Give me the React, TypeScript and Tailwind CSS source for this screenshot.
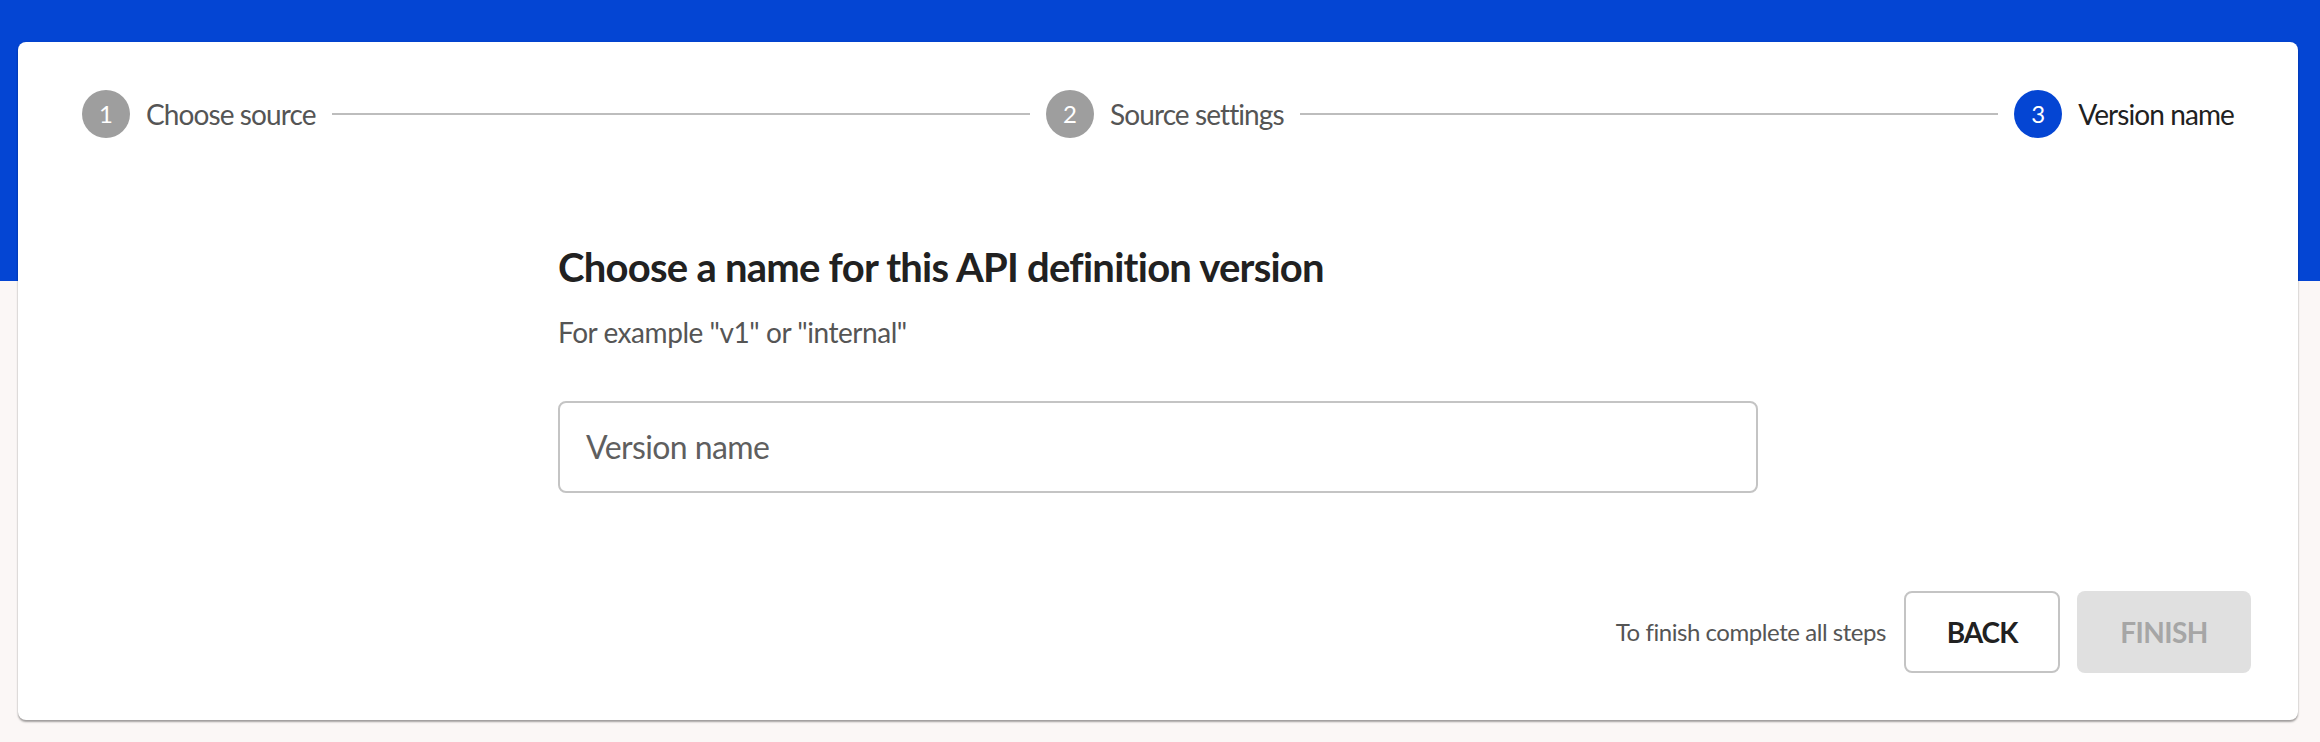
import React from "react";

const font = { fontFamily: "Lato, 'Liberation Sans', sans-serif" };

function Step({ n, label, active }: { n: number; label: string; active?: boolean }) {
  return (
    <div className="flex items-center shrink-0">
      <div
        className={
          "w-[48px] h-[48px] rounded-full flex items-center justify-center text-white text-[24px] leading-none " +
          (active ? "bg-[#0445d3]" : "bg-[#9e9e9e]")
        }
      >
        {n}
      </div>
      <span
        className={
          "ml-[16px] text-[28px] leading-none tracking-[-0.9px] " +
          (active ? "text-[#212121]" : "text-[#555555]")
        }
      >
        {label}
      </span>
    </div>
  );
}

function Connector() {
  return <div className="flex-1 h-[2px] bg-[#bdbdbd] mx-[16px]" />;
}

export default function App() {
  return (
    <div
      style={font}
      className="w-full h-[742px] overflow-hidden bg-[linear-gradient(to_bottom,#0445d3_281px,#fbf7f6_281px)] pt-[42px]"
    >
      <div className="ml-[18px] mr-[22px] h-[678px] bg-white rounded-[8px] shadow-[0_2px_2px_0_rgba(0,0,0,0.35),0_0_2px_0_rgba(0,0,0,0.10)] flex flex-col">
        <div className="pt-[48px] px-[64px] flex items-center h-[96px]">
          <Step n={1} label="Choose source" />
          <Connector />
          <Step n={2} label="Source settings" />
          <Connector />
          <Step n={3} label="Version name" active />
        </div>

        <div className="w-[1200px] mx-auto mt-[105px]">
          <h1 className="text-[40px] leading-[48px] font-bold text-[#212121] tracking-[-0.75px]">
            Choose a name for this API definition version
          </h1>
          <p className="mt-[20px] text-[28px] leading-[42px] text-[#555555] tracking-[-0.45px]">
            For example "v1" or "internal"
          </p>
          <div className="mt-[48px] h-[92px] border-2 border-[#c4c4c4] rounded-[8px] flex items-center px-[26px]">
            <span className="text-[32px] text-[#5f5f5f] tracking-[-0.6px]">Version name</span>
          </div>
        </div>

        <div className="mt-[98px] flex items-center justify-end pr-[47px]">
          <span className="text-[24px] text-[#555555] tracking-[-0.45px]">To finish complete all steps</span>
          <button className="ml-[18px] w-[156px] h-[82px] border-2 border-[#c4c4c4] rounded-[8px] bg-white text-[28px] font-bold text-[#212121] tracking-[-1px]">
            BACK
          </button>
          <button className="ml-[17px] w-[174px] h-[82px] rounded-[8px] bg-[#e0e0e0] text-[28px] font-bold text-[#a6a6a6] tracking-[-0.6px]">
            FINISH
          </button>
        </div>
      </div>
    </div>
  );
}
